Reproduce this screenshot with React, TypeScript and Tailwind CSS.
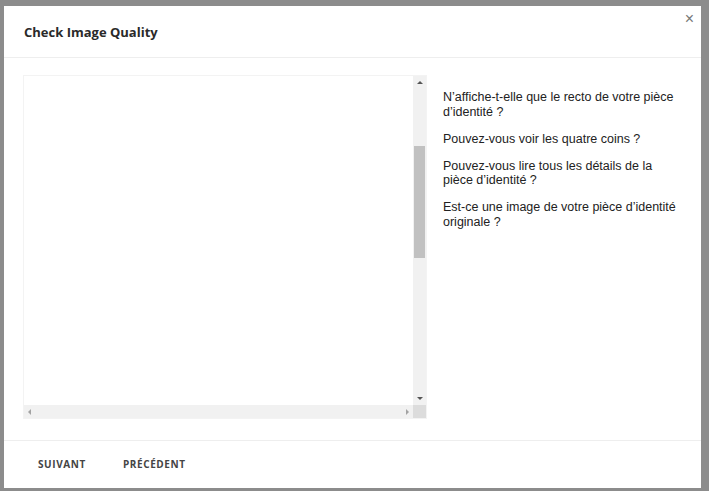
import React from "react";

export default function App() {
  return (
    <div className="w-[709px] h-[491px] bg-[#8c8c8c] pt-[6px] pl-[4px]">
      <div className="relative w-[697px] h-[482px] bg-white flex flex-col">
        <button className="absolute right-[7px] top-[5px] text-[#777] text-[16px] leading-none font-['Liberation_Sans',sans-serif]">×</button>
        <div className="h-[52px] border-b border-[#eeeeee] flex items-center pl-[20px] pt-[2px]">
          <h1 className="text-[13px] font-bold text-[#2a2a2a] font-['Open_Sans',sans-serif]">Check Image Quality</h1>
        </div>
        <div className="flex-1 flex pl-[19px] pt-[17px]">
          <div className="w-[404px] h-[344px] border border-[#f3f3f3] flex flex-col">
            <div className="flex-1 flex">
              <div className="flex-1 bg-white" />
              <div className="w-[13px] bg-[#f1f1f1] flex flex-col items-center">
                <div className="h-[13px] flex items-center justify-center">
                  <div className="w-0 h-0 border-l-[3px] border-r-[3px] border-b-[3px] border-l-transparent border-r-transparent border-b-[#555]" />
                </div>
                <div className="h-[57px]" />
                <div className="w-[11px] h-[112px] bg-[#c1c1c1]" />
                <div className="flex-1" />
                <div className="h-[13px] flex items-center justify-center">
                  <div className="w-0 h-0 border-l-[3px] border-r-[3px] border-t-[3px] border-l-transparent border-r-transparent border-t-[#555]" />
                </div>
              </div>
            </div>
            <div className="h-[13px] flex">
              <div className="flex-1 bg-[#f1f1f1] flex items-center justify-between px-[4px]">
                <div className="w-0 h-0 border-t-[3px] border-b-[3px] border-r-[3px] border-t-transparent border-b-transparent border-r-[#a3a3a3]" />
                <div className="w-0 h-0 border-t-[3px] border-b-[3px] border-l-[3px] border-t-transparent border-b-transparent border-l-[#a3a3a3]" />
              </div>
              <div className="w-[13px] bg-[#dcdcdc]" />
            </div>
          </div>
          <div className="pl-[16px] pt-[15px] w-[258px] flex flex-col gap-[12.5px] font-['Liberation_Sans',Arial,sans-serif] text-[12.5px] leading-[14.5px] text-[#222]">
            <p>N’affiche-t-elle que le recto de votre pièce d’identité ?</p>
            <p>Pouvez-vous voir les quatre coins ?</p>
            <p>Pouvez-vous lire tous les détails de la pièce d’identité ?</p>
            <p>Est-ce une image de votre pièce d’identité originale ?</p>
          </div>
        </div>
        <div className="h-[48px] border-t border-[#eeeeee] flex items-center pl-[34px] gap-[37px] font-['Open_Sans',sans-serif] text-[10px] font-bold tracking-[0.6px] text-[#444]">
          <span>SUIVANT</span>
          <span>PRÉCÉDENT</span>
        </div>
      </div>
    </div>
  );
}
